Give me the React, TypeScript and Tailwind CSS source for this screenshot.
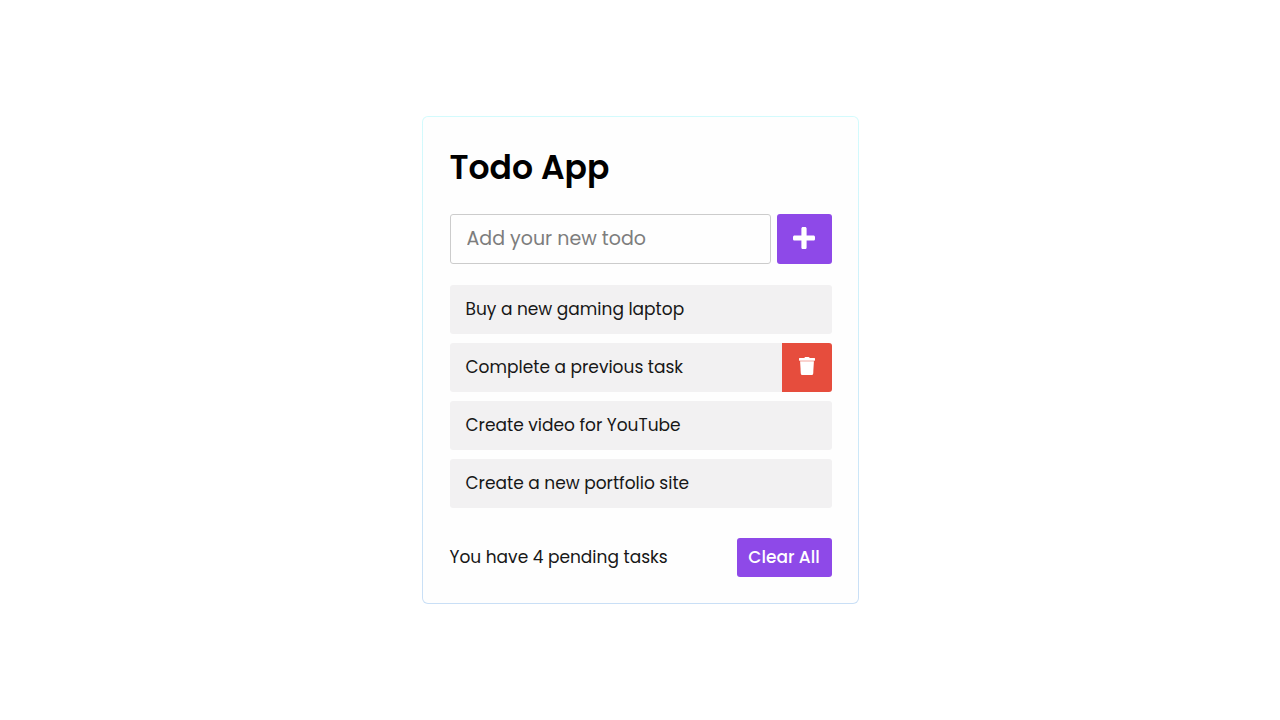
import { useState } from "react";

const initialTasks = [
  "Buy a new gaming laptop",
  "Complete a previous task",
  "Create video for YouTube",
  "Create a new portfolio site",
];

function PlusIcon() {
  return (
    <svg viewBox="0 0 22 22" className="mb-0.5 size-[22px]" fill="currentColor" aria-hidden="true">
      <path d="M10 0h2c.9 0 1.600.7 1.600 1.600v6.800h6.800c.9 0 1.600.7 1.600 1.600v2c0 .9-.7 1.600-1.600 1.600h-6.800v6.800c0 .9-.7 1.600-1.600 1.600h-2c-.9 0-1.600-.7-1.600-1.600v-6.800H1.600C.7 13.600 0 12.900 0 12v-2c0-.9.7-1.600 1.600-1.600h6.800V1.600C8.400.7 9.100 0 10 0z" />
    </svg>
  );
}

function TrashIcon() {
  return (
    <svg viewBox="0 0 16 18" className="mb-1 h-[18px] w-4" fill="currentColor" aria-hidden="true">
      <path d="M.5 1.100h4.600L6 .3c.2-.2.4-.3.700-.3h2.600c.3 0 .5.1.700.3l.9.800h4.600c.3 0 .5.200.5.500v1.700c0 .3-.2.500-.5.500H.5c-.3 0-.5-.2-.5-.5V1.600c0-.3.200-.5.500-.5z" />
      <path d="M1.100 4.200h13.800l-.7 12.200c-.1.900-.8 1.600-1.700 1.600h-9c-.9 0-1.600-.7-1.700-1.600z" />
    </svg>
  );
}

export default function App() {
  const [tasks, setTasks] = useState(initialTasks);
  const [draft, setDraft] = useState("");

  const addTask = () => {
    if (!draft.trim()) return;
    setTasks([...tasks, draft.trim()]);
    setDraft("");
  };

  return (
    <main className="flex min-h-screen items-center justify-center bg-white font-['Poppins','Inter',sans-serif] text-black">
      <div className="w-full max-w-[437px] rounded-md bg-linear-to-b from-[#d3fbfd] to-[#c9dff6] p-px">
        <div className="rounded-[5px] bg-[#fefefe] pt-[26px] pr-[26px] pb-[26px] pl-[27px]">
          <h1 className="text-[33px] leading-[50px] font-semibold">Todo App</h1>

          <form
            className="mt-[21px] flex gap-1.5"
            onSubmit={(e) => {
              e.preventDefault();
              addTask();
            }}
          >
            <input
              type="text"
              aria-label="New todo"
              placeholder="Add your new todo"
              value={draft}
              onChange={(e) => setDraft(e.target.value)}
              className="h-[50px] min-w-0 flex-1 rounded-[3px] border border-[#cccccc] px-4 pb-0.5 text-[19px] outline-none placeholder:text-[#7d7d7d] focus:border-[#8e49e8]"
            />
            <button
              type="submit"
              aria-label="Add todo"
              className="flex h-[50px] w-[55px] items-center justify-center rounded-[3px] bg-[#8e49e8] text-white"
            >
              <PlusIcon />
            </button>
          </form>

          <ul className="mt-[21px] flex flex-col gap-[9px]">
            {tasks.map((task, i) => (
              <li
                key={task}
                className="group flex h-[49px] items-stretch overflow-hidden rounded-[3px] bg-[#f2f1f2]"
              >
                <span className="flex flex-1 items-center pl-4 text-[17px] text-[#171717]">{task}</span>
                <button
                  type="button"
                  aria-label={`Delete ${task}`}
                  onClick={() => setTasks(tasks.filter((_, j) => j !== i))}
                  className={
                    i === 1
                      ? "flex w-[50px] items-center justify-center bg-[#e64d3d] text-white"
                      : "hidden w-[50px] items-center justify-center bg-[#e64d3d] text-white group-hover:flex"
                  }
                >
                  <TrashIcon />
                </button>
              </li>
            ))}
          </ul>

          <footer className="mt-[30px] flex items-center justify-between">
            <p className="text-[17px] text-[#171717]">You have {tasks.length} pending tasks</p>
            <button
              type="button"
              onClick={() => setTasks([])}
              className="h-[39px] w-[95px] rounded-[3px] bg-[#8e49e8] text-[17px] font-medium text-white"
            >
              Clear All
            </button>
          </footer>
        </div>
      </div>
    </main>
  );
}
